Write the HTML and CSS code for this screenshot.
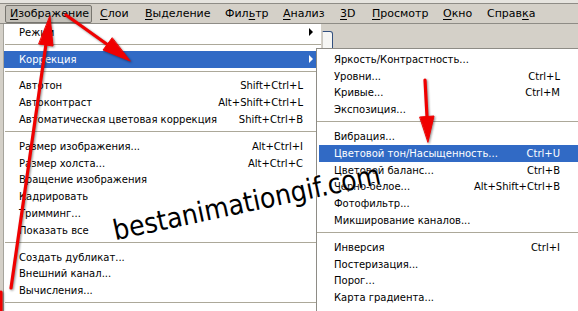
FILE: index.html
```html
<!DOCTYPE html>
<html lang="ru">
<head>
  <meta charset="UTF-8" />
  <meta name="viewport" content="width=device-width, initial-scale=1" />
  <title>Изображение - Коррекция</title>
  <link rel="stylesheet" href="styles.css">
</head>
<body>
  <div class="screen">
    <div class="topband"></div>
    <nav class="menubar">
      <span class="menubar-item open"><u>И</u>зображение</span>
      <span class="menubar-item w-layers"><u>С</u>лои</span>
      <span class="menubar-item w-select"><u>В</u>ыделение</span>
      <span class="menubar-item w-filter">Фил<u>ь</u>тр</span>
      <span class="menubar-item w-analysis"><u>А</u>нализ</span>
      <span class="menubar-item w-3d"><u>3</u>D</span>
      <span class="menubar-item w-view"><u>П</u>росмотр</span>
      <span class="menubar-item w-window"><u>О</u>кно</span>
      <span class="menubar-item">Справ<u>к</u>а</span>
    </nav>

    <div class="workspace">
      <ul class="menu menu-main">
        <li class="item"><span class="label">Режим</span><span class="key"></span><span class="sub"></span></li>
        <li class="sep"></li>
        <li class="item active"><span class="label">Коррекция</span><span class="key"></span><span class="sub"></span></li>
        <li class="sep"></li>
        <li class="item"><span class="label">Автотон</span><span class="key">Shift+Ctrl+L</span><span class="gap"></span></li>
        <li class="item"><span class="label">Автоконтраст</span><span class="key">Alt+Shift+Ctrl+L</span><span class="gap"></span></li>
        <li class="item"><span class="label">Автоматическая цветовая коррекция</span><span class="key">Shift+Ctrl+B</span><span class="gap"></span></li>
        <li class="sep"></li>
        <li class="item"><span class="label">Размер изображения...</span><span class="key">Alt+Ctrl+I</span><span class="gap"></span></li>
        <li class="item"><span class="label">Размер холста...</span><span class="key">Alt+Ctrl+C</span><span class="gap"></span></li>
        <li class="item"><span class="label">Вращение изображения</span><span class="key"></span><span class="gap"></span></li>
        <li class="item"><span class="label">Кадрировать</span><span class="key"></span><span class="gap"></span></li>
        <li class="item"><span class="label">Тримминг...</span><span class="key"></span><span class="gap"></span></li>
        <li class="item"><span class="label">Показать все</span><span class="key"></span><span class="gap"></span></li>
        <li class="sep"></li>
        <li class="item"><span class="label">Создать дубликат...</span><span class="key"></span><span class="gap"></span></li>
        <li class="item"><span class="label">Внешний канал...</span><span class="key"></span><span class="gap"></span></li>
        <li class="item"><span class="label">Вычисления...</span><span class="key"></span><span class="gap"></span></li>
        <li class="sep"></li>
      </ul>

      <div class="bg-window"></div>

      <ul class="menu menu-sub">
        <li class="item"><span class="label">Яркость/Контрастность...</span><span class="key"></span></li>
        <li class="item"><span class="label">Уровни...</span><span class="key">Ctrl+L</span></li>
        <li class="item"><span class="label">Кривые...</span><span class="key">Ctrl+M</span></li>
        <li class="item"><span class="label">Экспозиция...</span><span class="key"></span></li>
        <li class="sep"></li>
        <li class="item"><span class="label">Вибрация...</span><span class="key"></span></li>
        <li class="item active"><span class="label">Цветовой тон/Насыщенность...</span><span class="key">Ctrl+U</span></li>
        <li class="item"><span class="label">Цветовой баланс...</span><span class="key">Ctrl+B</span></li>
        <li class="item"><span class="label">Черно-белое...</span><span class="key">Alt+Shift+Ctrl+B</span></li>
        <li class="item"><span class="label">Фотофильтр...</span><span class="key"></span></li>
        <li class="item"><span class="label">Микширование каналов...</span><span class="key"></span></li>
        <li class="sep"></li>
        <li class="item"><span class="label">Инверсия</span><span class="key">Ctrl+I</span></li>
        <li class="item"><span class="label">Постеризация...</span><span class="key"></span></li>
        <li class="item"><span class="label">Порог...</span><span class="key"></span></li>
        <li class="item"><span class="label">Карта градиента...</span><span class="key"></span></li>
      </ul>
    </div>

    <span class="watermark">bestanimationgif.com</span>

    <!-- red pointer arrows drawn over the screenshot -->
    <svg class="arrows" width="578" height="311" viewBox="0 0 578 311">
      <g stroke="#f00000" stroke-width="3.2" stroke-linecap="round" fill="#f00000">
        <line x1="11" y1="288" x2="46" y2="44" />
        <polygon points="50,16 53,46 39,44" stroke-width="1" />
        <line x1="66" y1="15" x2="108" y2="45" />
        <polygon points="130,61 103,50 112,38" stroke-width="1" />
        <line x1="425" y1="80" x2="427" y2="117" />
        <polygon points="428,142 434,116 420,117" stroke-width="1" />
        <line x1="1" y1="292" x2="1" y2="311" />
      </g>
    </svg>
  </div>
</body>
</html>
```

FILE: styles.css
```css
* {
  box-sizing: border-box;
}
body {
  margin: 0;
  background: #d4d0c8;
  font-family: 'DejaVu Sans', Verdana, sans-serif;
  color: #000;
}
.screen {
  position: relative;
  width: 578px;
  height: 311px;
  overflow: hidden;
  background: #d4d0c8;
}
.topband {
  height: 4px;
  background: #e6e4df;
  border-bottom: 1px solid #8e8c86;
}
.menubar {
  display: flex;
  align-items: center;
  height: 20px;
  padding-left: 5px;
  border-bottom: 1px solid #8e8c86;
  font-size: 11px;
  white-space: nowrap;
}
.menubar-item {
  flex: none;
}
.menubar-item u {
  text-underline-offset: 2px;
}
.menubar-item.open {
  width: 87px;
  margin-right: 8px;
  padding: 0 0 0 4px;
  height: 18px;
  line-height: 16px;
  background: #c3c0b8;
  border: 1px solid #77756f;
  border-radius: 2px;
}
.w-layers { width: 45px; }
.w-select { width: 80px; }
.w-filter { width: 58px; }
.w-analysis { width: 57px; }
.w-3d { width: 32px; }
.w-view { width: 71px; }
.w-window { width: 44px; }

.workspace {
  height: 287px;
}
.menu {
  list-style: none;
  margin: 0;
  background: #fff;
  font-size: 10px;
}
.menu-main {
  width: 318px;
  height: 100%;
  margin-left: 3px;
  padding: 0;
  border-left: 1px solid #a6a49c;
}
.menu-sub {
  position: absolute;
  left: 316px;
  top: 48px;
  width: 268px;
  height: 270px;
  padding: 2px 2px 0 2px;
  border: 1px solid #8e8c86;
}
.item {
  display: flex;
  align-items: center;
  height: 16.8px;
  padding-left: 15px;
  white-space: nowrap;
}
.item .label {
  flex: 1;
}
.menu-main .item .sub,
.menu-main .item .gap {
  width: 18px;
  height: 8px;
  position: relative;
}
.menu-main .item .sub::after {
  content: '';
  position: absolute;
  left: 6px;
  top: 0;
  border-left: 4px solid #000;
  border-top: 4px solid transparent;
  border-bottom: 4px solid transparent;
}
.menu-main .item.active .sub::after {
  border-left-color: #fff;
}
.menu-sub .item {
  padding-right: 21px;
}
.item.active {
  background: #316ac5;
  color: #fff;
}
.sep {
  height: 10px;
  padding-top: 3px;
  margin: 0 0 0 1px;
}
.sep::before {
  content: '';
  display: block;
  height: 1px;
  background: #aca899;
}
.menu-sub .sep {
  margin: 0 -2px 0 -2px;
}

.bg-window {
  position: absolute;
  left: 322px;
  top: 31px;
  width: 11px;
  height: 18px;
  background: #f6f6f4;
  border: 1px solid #33507f;
  border-left-color: #c9c7c1;
  border-radius: 0 3px 0 0;
}

.watermark {
  position: absolute;
  left: 117px;
  top: 214px;
  font-family: 'Liberation Sans Narrow', 'DejaVu Sans Condensed', 'Liberation Sans', sans-serif;
  font-size: 28px;
  line-height: 34px;
  color: #000;
  transform: rotate(-12deg);
  transform-origin: 0 100%;
  text-shadow: 0 0 2px #fff;
}
.arrows {
  position: absolute;
  left: 0;
  top: 0;
  pointer-events: none;
  filter: drop-shadow(1px 1px 1px rgba(0, 0, 0, 0.45));
}
```
